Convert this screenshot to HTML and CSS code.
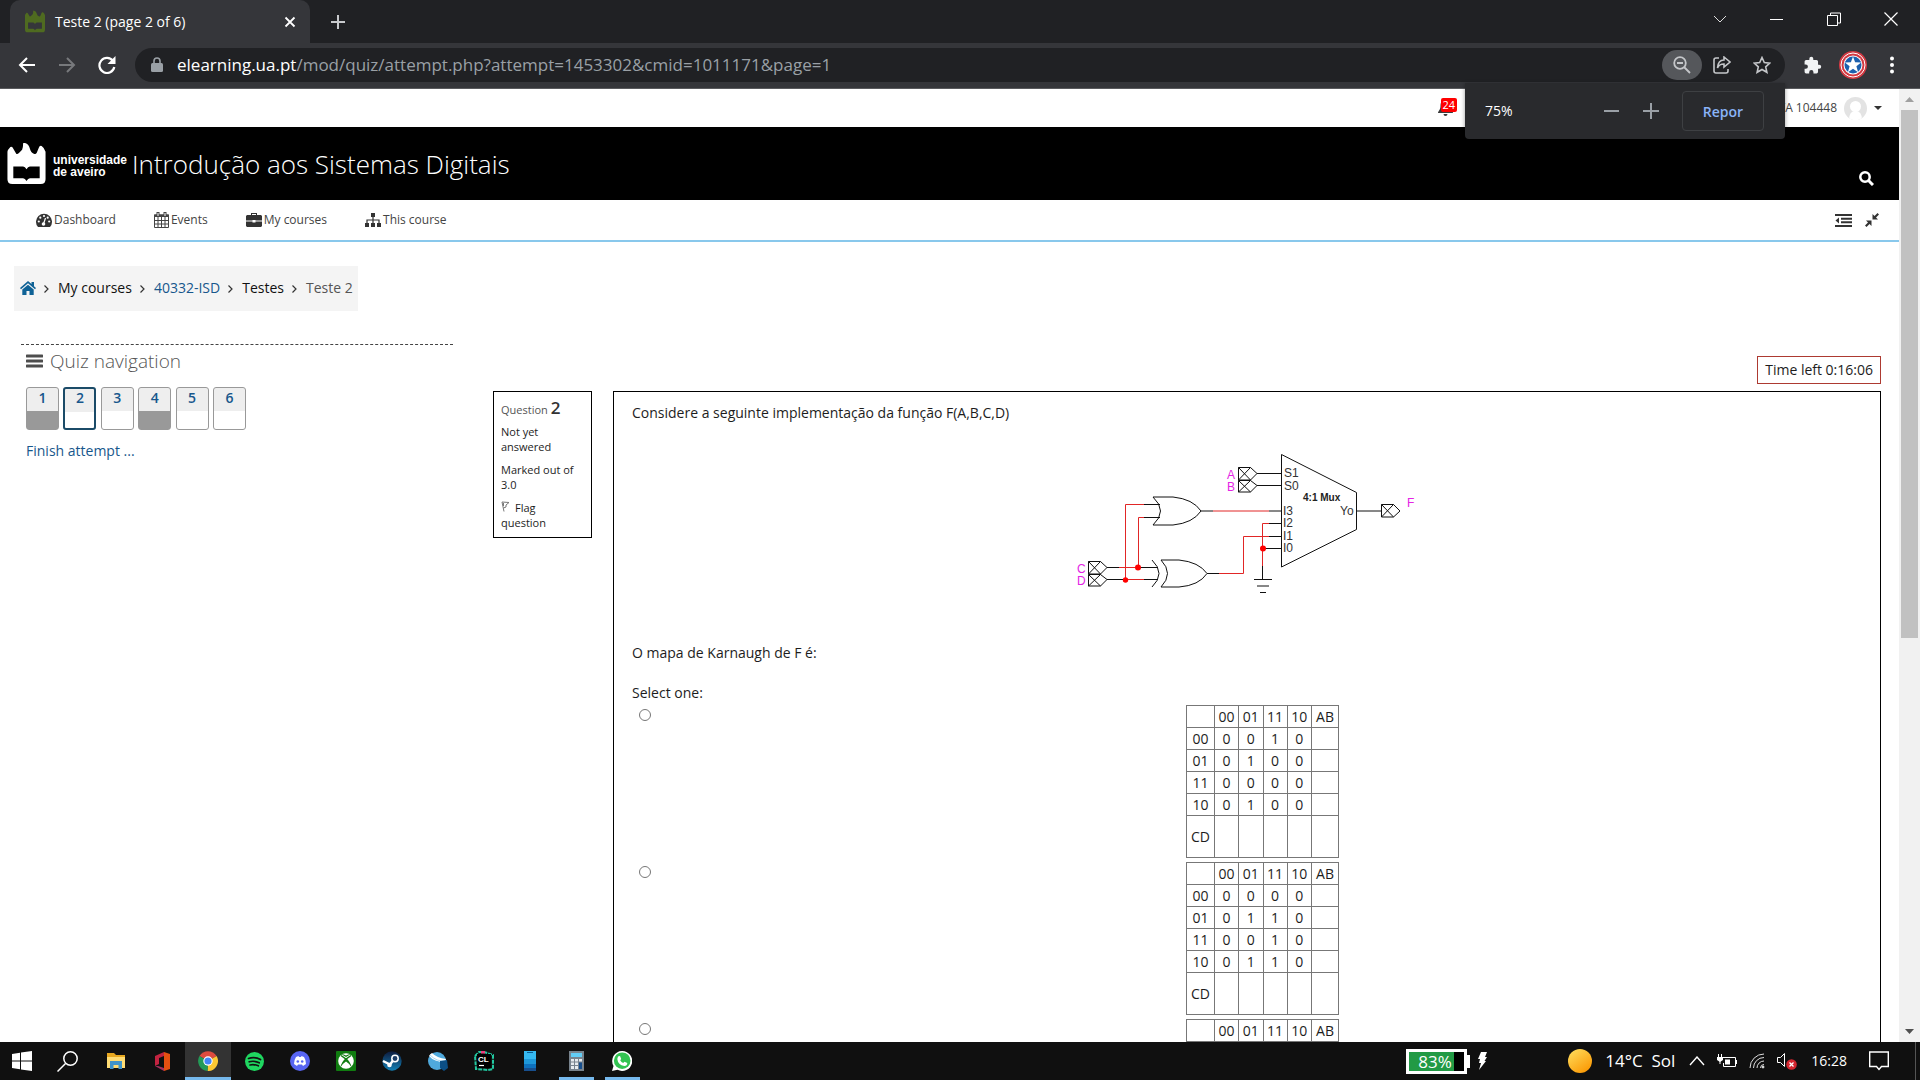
FILE: index.html
```html
<!DOCTYPE html>
<html lang="pt">
<head>
<meta charset="utf-8">
<title>Teste 2 (page 2 of 6)</title>
<link rel="stylesheet" href="styles.css">
</head>
<body>
<header class="browser">
  <div class="tabstrip">
    <div class="tab">
      <svg class="favicon" width="20" height="24" viewBox="0 0 39 44"><path fill="#4f6b20" d="M0 9q0-2 3-5 2-1 3 2l3 5q1 1 3-1l3-3q1-2 1-6 0-2 2-1 4 1 5 6 1 4 4 5 2 1 3-1l2-5q1-3 3-2 3 2 4 6v28q0 5-5 5H5q-5 0-5-5z"/><path fill="#35363a" d="M6 23h10q2 0 3.500 3 1.500-3 3.500-3h10v12H23q-2 0-3.500 3-1.500-3-3.500-3H6z"/></svg>
      <span class="tab-title">Teste 2 (page 2 of 6)</span>
      <button class="plain" aria-label="Close tab"><svg width="12" height="12" viewBox="0 0 12 12"><path d="M1.500 1.500l9 9m0-9l-9 9" stroke="#fff" stroke-width="1.800"/></svg></button>
    </div>
    <button class="plain newtab" aria-label="New tab"><svg width="16" height="16" viewBox="0 0 16 16"><path d="M8 1v14M1 8h14" stroke="#c8cacd" stroke-width="2"/></svg></button>
    <div class="window-controls">
      <button class="plain" aria-label="Search tabs"><svg width="14" height="14" viewBox="0 0 14 14"><path d="M1 4l6 6 6-6" fill="none" stroke="#ddd"/></svg></button>
      <button class="plain" aria-label="Minimize"><svg width="14" height="14" viewBox="0 0 14 14"><path d="M0 7.500h13" stroke="#fff"/></svg></button>
      <button class="plain" aria-label="Restore"><svg width="14" height="14" viewBox="0 0 14 14"><path d="M.5 3.500h10v10H.5zM3.500 3V1h10v10H11" fill="none" stroke="#fff"/></svg></button>
      <button class="plain" aria-label="Close"><svg width="14" height="14" viewBox="0 0 14 14"><path d="M.5.5l13 13m0-13l-13 13" stroke="#fff" stroke-width="1.200"/></svg></button>
    </div>
  </div>
  <div class="toolbar">
    <div class="nav-buttons">
      <button class="plain" aria-label="Back"><svg width="18" height="18" viewBox="0 0 18 18"><path d="M17 9H2m7-7L2 9l7 7" fill="none" stroke="#fff" stroke-width="2"/></svg></button>
      <button class="plain" aria-label="Forward"><svg width="18" height="18" viewBox="0 0 18 18"><path d="M1 9h15M9 2l7 7-7 7" fill="none" stroke="#77797c" stroke-width="2"/></svg></button>
      <button class="plain" aria-label="Reload"><svg width="18" height="18" viewBox="0 0 18 18"><path d="M15 5a7.500 7.500 0 1 0 1.300 6" fill="none" stroke="#fff" stroke-width="2.200"/><path d="M17.500 0v8h-8z" fill="#fff"/></svg></button>
    </div>
    <div class="omnibox">
      <svg width="12" height="16" viewBox="0 0 12 16"><path d="M3 6V4a3 3 0 0 1 6 0v2" fill="none" stroke="#9aa0a6" stroke-width="1.600"/><rect y="6" width="12" height="9" rx="1.500" fill="#9aa0a6"/></svg>
      <span class="url"><b>elearning.ua.pt</b>/mod/quiz/attempt.php?attempt=1453302&amp;cmid=1011171&amp;page=1</span>
      <button class="plain zoom-pill" aria-label="Zoom"><svg width="18" height="18" viewBox="0 0 18 18" fill="none" stroke="#c4c6c9" stroke-width="1.800"><circle cx="7" cy="7" r="5.800"/><path d="M11 11l6 6M4 7h6"/></svg></button>
      <button class="plain" aria-label="Share"><svg width="18" height="18" viewBox="0 0 18 18" fill="none" stroke="#c4c6c9" stroke-width="1.600"><path d="M6 2H3Q1 2 1 4v11q0 2 2 2h10q2 0 2-2v-2"/><path d="M11 1l6 5-6 5V8q-5 0-6.500 4Q5 4 11 4z"/></svg></button>
      <button class="plain" aria-label="Bookmark"><svg width="18" height="18" viewBox="0 0 18 18"><path d="M9 1.500l2.300 5 5.500.6-4.100 3.700 1.200 5.500L9 13.500l-4.900 2.800 1.200-5.500L1.200 7.100l5.500-.6z" fill="none" stroke="#c4c6c9" stroke-width="1.600"/></svg></button>
      <div class="zoom-popup">
        <span class="zoom-value">75%</span>
        <button class="plain" aria-label="Zoom out"><svg width="16" height="16" viewBox="0 0 16 16"><path d="M0 8h15" stroke="#9aa0a6" stroke-width="2"/></svg></button>
        <button class="plain" aria-label="Zoom in"><svg width="16" height="16" viewBox="0 0 16 16"><path d="M0 8h16M8 0v16" stroke="#9aa0a6" stroke-width="2"/></svg></button>
        <button class="reset">Repor</button>
      </div>
    </div>
    <div class="toolbar-end">
      <button class="plain" aria-label="Extensions"><svg width="19" height="19" viewBox="0 0 24 24"><path fill="#f1f3f4" d="M20.500 11H19V7a2 2 0 0 0-2-2h-4V3.500a2.500 2.500 0 0 0-5 0V5H4a2 2 0 0 0-2 2v3.800h1.500a2.700 2.700 0 0 1 0 5.400H2V20a2 2 0 0 0 2 2h3.800v-1.500a2.700 2.700 0 0 1 5.400 0V22H17a2 2 0 0 0 2-2v-4h1.500a2.500 2.500 0 0 0 0-5z"/></svg></button>
      <button class="plain" aria-label="Profile"><svg width="28" height="28" viewBox="0 0 28 28"><circle cx="14" cy="14" r="14" fill="#d33a43"/><circle cx="14" cy="14" r="12" fill="none" stroke="#fff" stroke-width="1"/><circle cx="14" cy="14" r="9.500" fill="#fff"/><circle cx="14" cy="14" r="8.500" fill="#1c60ad"/><path fill="#fff" d="M14 5.500l2.100 5.700 6 .2-4.700 3.800 1.700 6L14 17.800l-5.100 3.400 1.700-6-4.700-3.800 6-.2z"/></svg></button>
      <button class="plain" aria-label="Menu"><svg width="4" height="18" viewBox="0 0 4 18" fill="#fff"><circle cx="2" cy="2.500" r="2"/><circle cx="2" cy="9" r="2"/><circle cx="2" cy="15.500" r="2"/></svg></button>
    </div>
  </div>
</header>

<div class="viewport">
  <div class="page">
    <div class="userbar">
      <a class="bell" href="#" aria-label="Notifications"><svg width="15" height="16" viewBox="0 0 15 16"><path fill="#3c3c3c" d="M7.500 0c4 0 5 3 5 6 0 4 2.500 5 2.500 7H0c0-2 2.500-3 2.500-7 0-3 1-6 5-6zM5.500 14h4a2 2 0 0 1-4 0z"/></svg><span class="badge">24</span></a>
      <a class="user" href="#">TA 104448</a>
      <svg width="23" height="23" viewBox="0 0 23 23"><clipPath id="av"><circle cx="11.500" cy="11.500" r="11.500"/></clipPath><g clip-path="url(#av)"><path fill="#e3e3e3" d="M0 0h23v23H0z"/><circle cx="11.500" cy="9.500" r="5.500" fill="#fff"/><path fill="#fff" d="M5 23q0-9 6.500-9t6.500 9z"/></g></svg>
      <svg width="8" height="4" viewBox="0 0 8 4"><path d="M0 0h8L4 4z" fill="#333"/></svg>
    </div>
    <div class="banner">
      <svg width="39" height="42" viewBox="0 0 39 43"><path fill="#fff" d="M0 9q0-2 3-5 2-1 3 2l3 5q1 1 3-1l3-3q1-2 1-6 0-2 2-1 4 1 5 6 1 4 4 5 2 1 3-1l2-5q1-3 3-2 3 2 4 6v28q0 5-5 5H5q-5 0-5-5z"/><path d="M6 24h10q2 0 3.500 3 1.500-3 3.500-3h10v12H23q-2 0-3.500 3-1.500-3-3.500-3H6z"/></svg>
      <div class="uni">universidade<br>de aveiro</div>
      <h1>Introdução aos Sistemas Digitais</h1>
      <button class="plain search" aria-label="Search"><svg width="15" height="15" viewBox="0 0 15 15" fill="none" stroke="#fff"><circle cx="6" cy="6" r="4.700" stroke-width="2.500"/><path d="M9.500 9.500l4.500 4.500" stroke-width="3"/></svg></button>
    </div>
    <nav class="mainnav">
      <a href="#"><svg width="16" height="14" viewBox="0 0 16 14"><path fill="#333" d="M2 14a8 8 0 1 1 12 0z"/><g fill="#fff"><circle cx="2.800" cy="8.500" r="1.100"/><circle cx="4.300" cy="4.700" r="1.100"/><circle cx="8" cy="3" r="1.100"/><circle cx="11.700" cy="4.700" r="1.100"/><circle cx="13.200" cy="8.500" r="1.100"/><circle cx="7.500" cy="11" r="1.800"/></g><path d="M7.500 11l2-6" stroke="#fff" stroke-width="1.200"/></svg>Dashboard</a>
      <a href="#"><svg width="15" height="16" viewBox="0 0 15 16"><path d="M.5 3h14v12.500H.5zM1 8.500h13M1 12h13M4 5v10M7.500 5v10M11 5v10" fill="none" stroke="#444"/><path d="M0 2.500h15V5H0z" fill="#444"/><path d="M4 0v4M11 0v4" stroke="#444" stroke-width="3"/><path d="M4 1v3M11 1v3" stroke="#fff"/></svg>Events</a>
      <a href="#"><svg width="16" height="14" viewBox="0 0 16 14"><path fill="#333" d="M5 2V0h6v2h4l1 1v4.500H9.500V7h-3v.500H0V3l1-1zm1 0h4V1H6zM0 8.500h6.500v1h3v-1H16V13l-1 1H1l-1-1z"/></svg>My courses</a>
      <a href="#"><svg width="16" height="14" viewBox="0 0 16 14"><path fill="#333" d="M6 0h4v4H6zM0 10h4v4H0zm6 0h4v4H6zm6 0h4v4h-4z"/><path d="M8 4v6M2 10V7h12v3" fill="none" stroke="#333" stroke-width="1.200"/></svg>This course</a>
      <span class="nav-tools">
        <a href="#" aria-label="Hide blocks"><svg width="17" height="13" viewBox="0 0 17 13" fill="#333"><path d="M0 0h17v2H0zM6 3.700h11v2H6zM6 7.300h11v2H6zM0 11h17v2H0zM4 3.500v6L.5 6.500z"/></svg></a>
        <a href="#" aria-label="Standard view"><svg width="14" height="14" viewBox="0 0 14 14" fill="#333"><path d="M7.500 6.500V1l2 2L12.500 0 14 1.500 11 4.500l2 2zM6.500 7.500V13l-2-2L1.500 14 0 12.500l3-3-2-2z"/></svg></a>
      </span>
    </nav>
    <nav class="crumbs">
      <a class="blue" href="#" aria-label="Home"><svg width="16" height="14" viewBox="0 0 16 14" fill="#0f6296"><path d="M8 0l3.500 3V1H14v4.200l2 1.800-1 1.200-7-6-7 6L0 7zM2.300 8.500L8 3.700l5.700 4.800V14H9.500v-4h-3v4H2.300z"/></svg></a>
      <svg width="5" height="8" viewBox="0 0 5 8"><path d="M.5.5L4 4 .5 7.500" fill="none" stroke="#333" stroke-width="1.200"/></svg><span>My courses</span>
      <svg width="5" height="8" viewBox="0 0 5 8"><path d="M.5.5L4 4 .5 7.500" fill="none" stroke="#333" stroke-width="1.200"/></svg><a class="blue" href="#">40332-ISD</a>
      <svg width="5" height="8" viewBox="0 0 5 8"><path d="M.5.5L4 4 .5 7.500" fill="none" stroke="#333" stroke-width="1.200"/></svg><span>Testes</span>
      <svg width="5" height="8" viewBox="0 0 5 8"><path d="M.5.5L4 4 .5 7.500" fill="none" stroke="#333" stroke-width="1.200"/></svg><span class="current">Teste 2</span>
    </nav>
    <main class="columns">
      <aside>
        <h2><svg width="17" height="14" viewBox="0 0 17 14"><path d="M1 2h15M1 7h15M1 12h15" stroke="#4d4d4d" stroke-width="3" stroke-linecap="round"/></svg>Quiz navigation</h2>
        <div class="qnav">
          <a class="saved" href="#">1</a><a class="active" href="#">2</a><a href="#">3</a><a class="saved" href="#">4</a><a href="#">5</a><a href="#">6</a>
        </div>
        <a class="blue" href="#">Finish attempt ...</a>
      </aside>
      <section>
        <div class="timer">Time left 0:16:06</div>
        <div class="question">
          <div class="info">
            <h3>Question <b>2</b></h3>
            <p>Not yet answered</p>
            <p>Marked out of 3.0</p>
            <p class="flag"><a href="#"><svg width="9" height="11" viewBox="0 0 9 11"><path d="M1 1l2 9.500M1 1l7 .5-3 2.500v2L2.500 7M2.500 2v3" fill="none" stroke="#777"/></svg>Flag question</a></p>
          </div>
          <form class="body">
            <p>Considere a seguinte implementação da função F(A,B,C,D)</p>
            <svg class="circuit" width="375" height="180" viewBox="0 0 375 180" fill="none" stroke="#111">
              <path d="M221.500 24.500l75 38v37l-75 37.500z"/>
              <path d="M197 43.500h24M197 55.500h24M141 81h12M209 81h12M209 93.500h12M209 106.500h12M203 118.500h18M297 81h24M84 74.500h16M84 87.500h16M47 137.500h12M47 149.500h51M80 137.500h18M147 143.500h12M202.500 136v14M194 149.500h18M197 156h12M200 162.500h6"/>
              <path d="M178.500 37.500h12l6.500 6-6.500 6.500h-12zM178.500 37.500l12 12.500m0-12.500l-12 12.500M178.500 50.500h12l6.500 5-6.500 6.500h-12zM178.500 50.500l12 11.500m0-11.500l-12 11.500M28.500 131.500h12l6.500 6-6.500 6.500h-12zM28.500 131.500l12 12.500m0-12.500l-12 12.500M28.500 144.500h12l6.500 5-6.500 6.500h-12zM28.500 144.500l12 11.500m0-11.500l-12 11.500M321.500 74.500h12l6.500 6.500-6.500 6h-12zM321.500 74.500l12 12.500m0-12.500l-12 12.500"/>
              <path d="M93 67h20q20 2 28 14-8 12-28 14H93q15-14 0-28zM101 130h18q20 2 28 13.500-8 12-28 13.500h-18q13-13.500 0-27zM92 130q14 13.500 0 27"/>
              <path stroke="#e12626" d="M153 81h56M65.500 149.500v-75H84M78.500 137.500v-50H84M59 137.500h21M65 149.500h19M159 143.500h24.500v-37H209M209 93.500h-6.500V136"/>
              <g fill="#f00" stroke="none"><circle cx="78" cy="137.500" r="3"/><circle cx="65.500" cy="150" r="2.700"/><circle cx="203" cy="118.500" r="3"/></g>
              <g class="pin-label"><text x="167" y="49">A</text><text x="167" y="61">B</text><text x="17" y="143">C</text><text x="17" y="155">D</text><text x="347" y="77">F</text></g>
              <g class="port-label"><text x="224" y="47">S1</text><text x="224" y="60">S0</text><text x="223" y="85">I3</text><text x="223" y="97">I2</text><text x="223" y="110">I1</text><text x="223" y="122">I0</text><text x="280" y="85">Yo</text></g>
              <text class="mux-label" x="243" y="71">4:1 Mux</text>
            </svg>
            <p>O mapa de Karnaugh de F é:</p>
            <fieldset>
              <legend>Select one:</legend>
              <div class="option"><input type="radio" name="answer" aria-label="a">
                <table>
                  <tr><td></td><td>00</td><td>01</td><td>11</td><td>10</td><td>AB</td></tr>
                  <tr><td>00</td><td>0</td><td>0</td><td>1</td><td>0</td><td></td></tr>
                  <tr><td>01</td><td>0</td><td>1</td><td>0</td><td>0</td><td></td></tr>
                  <tr><td>11</td><td>0</td><td>0</td><td>0</td><td>0</td><td></td></tr>
                  <tr><td>10</td><td>0</td><td>1</td><td>0</td><td>0</td><td></td></tr>
                  <tr><td>CD</td><td></td><td></td><td></td><td></td><td></td></tr>
                </table></div>
              <div class="option"><input type="radio" name="answer" aria-label="b">
                <table>
                  <tr><td></td><td>00</td><td>01</td><td>11</td><td>10</td><td>AB</td></tr>
                  <tr><td>00</td><td>0</td><td>0</td><td>0</td><td>0</td><td></td></tr>
                  <tr><td>01</td><td>0</td><td>1</td><td>1</td><td>0</td><td></td></tr>
                  <tr><td>11</td><td>0</td><td>0</td><td>1</td><td>0</td><td></td></tr>
                  <tr><td>10</td><td>0</td><td>1</td><td>1</td><td>0</td><td></td></tr>
                  <tr><td>CD</td><td></td><td></td><td></td><td></td><td></td></tr>
                </table></div>
              <div class="option"><input type="radio" name="answer" aria-label="c">
                <table>
                  <tr><td></td><td>00</td><td>01</td><td>11</td><td>10</td><td>AB</td></tr>
                  <tr><td></td><td></td><td></td><td></td><td></td><td></td></tr>
                </table></div>
            </fieldset>
          </form>
        </div>
      </section>
    </main>
  </div>
  <div class="scrollbar">
    <svg width="9" height="5" viewBox="0 0 9 5"><path d="M0 5h9L4.500 0z" fill="#a0a0a0"/></svg>
    <div class="track"><div class="thumb"></div></div>
    <svg width="9" height="5" viewBox="0 0 9 5"><path d="M0 0h9L4.500 5z" fill="#505050"/></svg>
  </div>
</div>

<footer class="taskbar">
  <div class="apps">
    <button class="plain start" aria-label="Start"><svg width="20" height="20" viewBox="0 0 20 20" fill="#fff"><path d="M0 3l8-1.200V9.500H0zM9 1.600L20 0v9.500H9zM0 10.500h8v7.700L0 17zM9 10.500h11V20L9 18.400z"/></svg></button>
    <button class="plain find" aria-label="Search"><svg width="21" height="21" viewBox="0 0 21 21" fill="none" stroke="#fff" stroke-width="1.500"><circle cx="13.500" cy="7.500" r="6.700"/><path d="M8.500 12.500L.5 20.500"/></svg></button>
    <button class="plain" aria-label="Explorer"><svg width="18" height="18" viewBox="0 0 18 18"><path fill="#e8a820" d="M0 1h7l2 2h9v5H0z"/><path fill="#ffdc74" d="M0 5h18v11H0z"/><path fill="#3f93c9" d="M3 17V9h12v8h-3.500v-4h-5v4z"/></svg></button>
    <button class="plain" aria-label="Office"><svg width="16" height="19" viewBox="0 0 16 19"><path fill="#c22340" d="M10 0L1 4v10l4-2V6l5-2z"/><path fill="#a63060" d="M1 14l9 5v-3l-6-2z"/><path fill="#e65010" d="M10 0l6 2v15l-6 2z"/></svg></button>
    <button class="plain open current-app" aria-label="Chrome"><svg width="20" height="20" viewBox="0 0 20 20"><path fill="#dd4b3e" d="M10 10L1.500 5a10 10 0 0 1 17 0z"/><path fill="#fcc934" d="M10 10l8.600-5A10 10 0 0 1 9.500 20z"/><path fill="#239a57" d="M10 10l-.500 10A10 10 0 0 1 1.400 5z"/><circle cx="10" cy="10" r="4.700" fill="#fff"/><circle cx="10" cy="10" r="3.600" fill="#4285f4"/></svg></button>
    <button class="plain" aria-label="Spotify"><svg width="19" height="19" viewBox="0 0 19 19"><circle cx="9.500" cy="9.500" r="9.500" fill="#1fd760"/><path d="M3.500 6.500q6-2 12 1M4.200 9.800q5-1.500 10 1M5 13q4-1 8.300.8" fill="none" stroke="#121212" stroke-width="1.700" stroke-linecap="round"/></svg></button>
    <button class="plain" aria-label="Discord"><svg width="20" height="20" viewBox="0 0 20 20"><circle cx="10" cy="10" r="10" fill="#5865f2"/><path fill="#fff" d="M6 6l2.500-1 .5 1h2l.5-1L14 6q2 3 2 7l-3 2-1-1.500H8L7 15l-3-2q0-4 2-7z"/><g fill="#5865f2"><circle cx="7.800" cy="10.500" r="1.300"/><circle cx="12.200" cy="10.500" r="1.300"/></g></svg></button>
    <button class="plain" aria-label="Xbox"><svg width="20" height="20" viewBox="0 0 20 20"><rect width="20" height="20" rx="1" fill="#107c10"/><circle cx="10" cy="10" r="7.800" fill="#fff"/><path d="M4 17Q6 10 10 7q4 3 6 10-3-5-6-6.500Q7 12 4 17zM5 3q3 0 5 1.500Q12 3 15 3l-5 3z" fill="#107c10"/><path d="M5 4.500L10 8l5-3.500" fill="none" stroke="#107c10" stroke-width="1.500"/></svg></button>
    <button class="plain" aria-label="Steam"><svg width="20" height="20" viewBox="0 0 20 20"><defs><linearGradient id="st" x2="0" y2="1"><stop stop-color="#0e1b3d"/><stop offset="1" stop-color="#1380b5"/></linearGradient></defs><circle cx="10" cy="10" r="9.700" fill="url(#st)"/><path d="M1 10l7 3.500L13 7" fill="none" stroke="#fff" stroke-width="2.500"/><circle cx="13" cy="7.500" r="3.200" fill="#1c3c66" stroke="#fff" stroke-width="1.500"/><circle cx="7.500" cy="14" r="2.300" fill="#fff"/></svg></button>
    <button class="plain" aria-label="Globe"><svg width="20" height="20" viewBox="0 0 20 20"><circle cx="9" cy="10" r="9" fill="#4fa9dc"/><path d="M1 5q1-2 3-3 5 5 14 6l-1 3Q6 11 1 5z" fill="#fff"/><path d="M2 4q7 7 15 6" fill="none" stroke="#a9d8f2" stroke-width="1"/><path d="M12 10l7-1 1 8-4 3-4-3z" fill="#0c4f85"/></svg></button>
    <button class="plain" aria-label="CLion"><svg width="20" height="20" viewBox="0 0 20 20"><path d="M1 5l4-4h5l9 3v14l-5 1-12-1z" fill="none" stroke="#22c7a0" stroke-width="2" stroke-dasharray="4 1"/><path d="M7 1h4" stroke="#ed3d7d" stroke-width="3"/><path d="M3 3h14v14H3z"/><text class="cl" x="4" y="11">CL</text><path d="M5 14.500h5" stroke="#fff" stroke-width="1.200"/></svg></button>
    <button class="plain" aria-label="Phone"><svg width="12" height="20" viewBox="0 0 12 20"><path fill="#35b9f1" d="M0 0h12v20H0z"/><path fill="#1e98da" d="M0 8h12v12H0z"/><path fill="#0e72bf" d="M0 13h12v7H0z"/><path fill="#174f8e" d="M0 17h12v3H0z"/><path d="M3 1.500h6" stroke="#0b5c94"/></svg></button>
    <button class="plain open" aria-label="Calculator"><svg width="15" height="20" viewBox="0 0 15 20"><path fill="#78838d" d="M0 0h15v20H0z"/><path fill="#62cdf5" d="M2 2h11v4H2z"/><path fill="#e7ebee" d="M2 8h3v2.500H2zm4 0h3v2.500H6zm4 0h3v2.500h-3zm-8 3.500h3V14H2zm4 0h3V14H6zM2 15h3v3H2zm4 0h3v3H6z"/><path fill="#174f8e" d="M10 11.500h3V18h-3z"/></svg></button>
    <button class="plain open" aria-label="WhatsApp"><svg width="20" height="20" viewBox="0 0 20 20"><path fill="#fff" d="M10 0a10 10 0 1 1-4.500 18.800L0 20l1.500-5A10 10 0 0 1 10 0z"/><circle cx="10.200" cy="9.700" r="8.300" fill="#32c351"/><path fill="#fff" d="M6 5.500l2-.5 1.200 3-1 1.200q1 2 3 2.800l1.300-1.300 2.800 1.300q0 3-3 3Q6 14 5.300 8z"/></svg></button>
  </div>
  <div class="tray">
    <div class="battery"><span>83%</span></div><i class="cap"></i>
    <svg class="bolt" width="9" height="18" viewBox="0 0 9 18"><path fill="#fff" d="M3 0h6L7 5h2L6.500 9H8L1 18l2-7H1l1-4H0z"/></svg>
    <svg class="sun" width="24" height="24" viewBox="0 0 24 24"><defs><linearGradient id="sn" x2=".7" y2="1"><stop stop-color="#ffe060"/><stop offset="1" stop-color="#fb9a06"/></linearGradient></defs><circle cx="12" cy="12" r="12" fill="url(#sn)"/></svg>
    <span class="weather">14°C&nbsp; Sol</span>
    <svg class="t1" width="16" height="10" viewBox="0 0 16 10"><path d="M1 9l7-8 7 8" fill="none" stroke="#fff" stroke-width="1.400"/></svg>
    <svg class="t2" width="20" height="14" viewBox="0 0 20 14"><path d="M5 3.500h13.500v9h-12V9M19.500 6v4M1.500 0v3M4.500 0v3M3 7v3" fill="none" stroke="#fff"/><path fill="#fff" d="M8 5.500h5v5H8zM0 3h6v3L3 8 0 6z"/></svg>
    <svg class="t2" width="16" height="16" viewBox="0 0 16 16" fill="none" stroke="#ddd"><path d="M1 15A14 14 0 0 1 15 1M4.500 15A10.500 10.500 0 0 1 15 4.500M8 15a7 7 0 0 1 7-7M11.500 15a3.500 3.500 0 0 1 3.500-3.500"/><circle cx="14" cy="14" r="1" fill="#fff"/></svg>
    <svg class="t2" width="20" height="17" viewBox="0 0 20 17"><path d="M.5 4.500h3l4-4v13l-4-4h-3z" fill="none" stroke="#fff"/><circle cx="14.500" cy="11.500" r="5.300" fill="#d3262f"/><path d="M12.500 9.500l4 4m0-4l-4 4" stroke="#fff" stroke-width="1.300"/></svg>
    <span class="clock">16:28</span>
    <svg class="note" width="20" height="20" viewBox="0 0 20 20"><path d="M.7 1h18.600v14.500H12.500L10 18.500 7.500 15.500H.7z" fill="none" stroke="#fff" stroke-width="1.400"/></svg>
    <i class="peek"></i>
  </div>
</footer>
</body>
</html>
```
FILE: styles.css
```css
* { box-sizing: border-box; }
body {
  margin: 0;
  height: 100vh;
  display: flex;
  flex-direction: column;
  overflow: hidden;
  font: 14px/20px "Open Sans", "Noto Sans", sans-serif;
  color: #1d1d1d;
  background: #fff;
}
svg { display: block; flex: none; }
a { color: inherit; text-decoration: none; }
h1, h2, h3, p { margin: 0; font-weight: 400; }
.plain { background: none; border: 0; padding: 0; display: flex; align-items: center; justify-content: center; }
.blue { color: #17578c; }

/* Browser frame */
.tabstrip { height: 43px; background: #202124; display: flex; align-items: center; }
.tab {
  align-self: stretch;
  width: 300px;
  margin-left: 10px;
  padding: 0 14px 0 15px;
  display: flex;
  align-items: center;
  background: #35363a;
  border-radius: 10px 10px 0 0;
}
.tab-title { flex: 1; margin-left: 10px; color: #fff; }
.newtab { margin-left: 20px; }
.window-controls { margin-left: auto; margin-bottom: 6px; padding-right: 22px; display: flex; gap: 43px; }
.toolbar {
  height: 46px;
  padding: 5px 26px 6px 18px;
  display: flex;
  align-items: stretch;
  background: #35363a;
  border-bottom: 1px solid #5a5b5e;
}
.nav-buttons { width: 117px; display: flex; gap: 22px; }
.omnibox {
  flex: 1;
  position: relative;
  display: flex;
  align-items: center;
  gap: 11px;
  padding: 0 14px 0 16px;
  background: #202124;
  border-radius: 18px;
}
.url { flex: 1; margin-left: 3px; color: #9aa0a6; font-size: 17px; }
.url b { font-weight: 400; color: #fff; }
.zoom-pill { width: 40px; height: 30px; border-radius: 15px; background: #55575b; }
.omnibox > .plain:nth-of-type(3) { margin-left: 11px; }
.toolbar-end { margin-left: 18px; display: flex; gap: 17px; }
.toolbar-end .plain:last-child { margin-left: 6px; }
.zoom-popup {
  position: absolute;
  z-index: 2;
  top: 35px;
  right: 0;
  width: 320px;
  height: 56px;
  padding: 0 21px 0 20px;
  display: flex;
  align-items: center;
  gap: 23px;
  background: #292a2d;
  border-radius: 0 0 4px 4px;
  box-shadow: 0 1px 4px #0006;
}
.zoom-value { flex: 1; color: #fff; }
.reset {
  width: 82px;
  height: 40px;
  background: none;
  border: 1px solid #3e4043;
  border-radius: 4px;
  color: #8ab4f8;
  font: 600 14px "Open Sans", sans-serif;
}

/* Page */
.viewport { flex: 1; min-height: 0; display: flex; }
.page { flex: 1; overflow: hidden; }
.userbar { height: 38px; padding-right: 17px; display: flex; align-items: center; justify-content: flex-end; gap: 7px; font-size: 12px; color: #444; }
.bell { position: relative; margin-right: 319px; }
.badge {
  position: absolute;
  left: 3px;
  top: -2px;
  padding: 0 2px;
  border-radius: 2px;
  background: #f00;
  color: #fff;
  font-size: 11px;
  line-height: 14px;
}
.banner { height: 73px; padding: 0 25px 0 7px; display: flex; align-items: center; background: #000; color: #fff; }
.uni { margin: 4px 9px 0 7px; width: 70px; font: bold 12px/12px "Liberation Sans", sans-serif; }
.banner h1 { font-size: 26px; font-weight: 300; line-height: 32px; }
.search { margin: 30px 0 0 auto; }
.mainnav {
  height: 42px;
  padding: 0 20px 0 36px;
  display: flex;
  align-items: center;
  gap: 38px;
  border-bottom: 2px solid #89c8ec;
  font-size: 12px;
  color: #444;
}
.mainnav a { display: flex; align-items: center; gap: 2px; }
.nav-tools { margin-left: auto; display: flex; gap: 13px; }
.crumbs {
  width: fit-content;
  height: 45px;
  margin: 24px 0 0 14px;
  padding: 0 5px 2px 6px;
  display: flex;
  align-items: center;
  gap: 9px;
  background: #f4f4f4;
  color: #111;
}
.crumbs > svg { margin: 3px 0 0 -1px; }
.current { color: #555; }
.columns { display: grid; grid-template-columns: 432px 1fr; gap: 40px; padding: 0 18px 0 21px; }
aside { margin-top: 33px; border-top: 1px dashed #444; padding-left: 5px; }
h2 { display: flex; align-items: center; gap: 7px; margin-top: 4px; font-size: 19px; font-weight: 300; line-height: 24px; color: #555; }
.qnav { width: 220px; margin: 14px 0 11px; display: flex; justify-content: space-between; }
.qnav a {
  width: 33px;
  height: 43px;
  border: 1px solid #999;
  border-radius: 3px;
  background: linear-gradient(#eee 23px, #fff 23px);
  color: #17578c;
  font-weight: 600;
  text-align: center;
}
.qnav .saved { background: linear-gradient(#eee 23px, #999 23px); }
.qnav .active { border: 2px solid #1b4b68; line-height: 18px; }
.timer { width: fit-content; margin: 45px 0 7px auto; padding: 3px 7px; border: 1px solid #ad3a31; }
.question { display: flex; align-items: flex-start; gap: 21px; }
.info { width: 99px; padding: 7px; border: 1px solid #000; font-size: 11px; line-height: 15px; }
.info h3 { height: 17px; font-size: 11px; line-height: 17px; color: #555; }
.info b { font-size: 17px; font-weight: 600; color: #333; }
.info p { margin-top: 8px; }
.info .flag { padding-right: 16px; }
.info svg { display: inline; margin-right: 5px; }
.body { flex: 1; padding: 11px 17px 40px 18px; border: 1px solid #000; }
.circuit { margin: 7px auto 33px; font: 12px "Liberation Sans", sans-serif; }
.circuit text { stroke: none; }
.pin-label { fill: #e424e4; }
.port-label { fill: #333; }
.circuit .mux-label { fill: #222; font-size: 10px; font-weight: bold; }
fieldset { margin: 20px 0 0; padding: 0; border: 0; }
legend { padding: 0 0 2px; }
.option { display: flex; align-items: flex-start; margin-bottom: 4px; padding-left: 7px; }
.option input { width: 12px; height: 12px; margin: 4px 11px 0 0; }
table { margin: 0 auto; border-collapse: collapse; table-layout: fixed; width: 153px; }
td { height: 22px; padding: 0; border: 1px solid #777; text-align: center; }
td:first-child { width: 28px; }
td:last-child { width: 27px; }
tr:nth-child(6) td { height: 42px; }

/* Scrollbar */
.scrollbar { width: 21px; padding: 8px 2px; display: flex; flex-direction: column; align-items: center; gap: 8px; background: #f1f1f1; }
.track { flex: 1; width: 100%; }
.thumb { height: 58%; background: #c1c1c1; }

/* Taskbar */
.taskbar { height: 38px; padding-right: 4px; display: flex; justify-content: space-between; background: #101010; color: #fff; }
.apps { display: flex; }
.apps .plain { width: 46px; }
.apps .start { width: 44px; }
.apps .find { margin-right: 3px; }
.apps .open { background: linear-gradient(#76b9ed, #76b9ed) bottom / 35px 3px no-repeat; }
.apps .current-app { background-color: #333; background-size: 46px 3px; }
.cl { fill: #fff; font: bold 8px "Liberation Sans", sans-serif; }
.tray { display: flex; align-items: center; }
.battery {
  width: 61px;
  height: 25px;
  border: 3px solid #fff;
  background: linear-gradient(90deg, #229a45 45px, #000 45px);
  font-size: 17px;
  line-height: 19px;
  padding-left: 9px;
}
.cap { width: 3px; height: 13px; background: #fff; }
.bolt { margin-left: 8px; }
.sun { margin-left: 81px; }
.weather { margin-left: 13px; font-size: 17px; }
.t1 { margin-left: 14px; }
.t2 { margin-left: 12px; }
.clock { margin-left: 14px; }
.note { margin-left: 22px; }
.peek { width: 1px; height: 38px; margin-left: 26px; background: #555; }
```
